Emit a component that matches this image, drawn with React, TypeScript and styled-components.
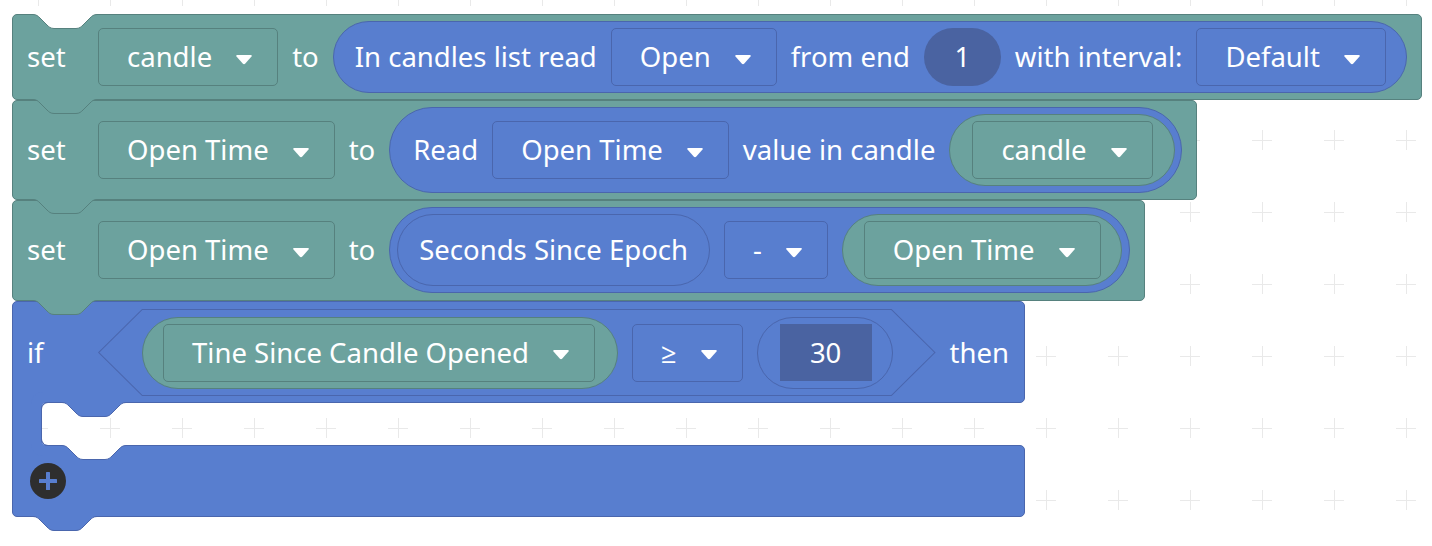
import React from 'react';
import styled, { createGlobalStyle, css } from 'styled-components';

type Tone = 'teal' | 'blue';

const palette: Record<Tone, { fill: string; stroke: string }> = {
  teal: { fill: '#6ca29e', stroke: '#56817e' },
  blue: { fill: '#587ecf', stroke: '#4a66ad' },
};
const FIELD_DARK = '#4a63a1';
const GRID_COLOR = '#e9e9e9';
const NOTCH =
  'c 3.5,0 5.25,1.75 7,3.5 l 7,7 c 1.75,1.75 3.5,3.5 7,3.5 h 22 c 3.5,0 5.25,-1.75 7,-3.5 l 7,-7 c 1.75,-1.75 3.5,-3.5 7,-3.5';

const GlobalStyle = createGlobalStyle`
  *, *::before, *::after { box-sizing: border-box; }
  html, body { margin: 0; padding: 0; background: #ffffff; }
  body { font-family: "Noto Sans", "Open Sans", sans-serif; }
`;

const Workspace = styled.main`
  position: relative;
  width: 1432px;
  height: 546px;
  overflow: hidden;
  background: #ffffff;
  color: #ffffff;
`;

const GridLayer = styled.svg`
  position: absolute;
  inset: 0;
  width: 100%;
  height: 100%;
`;

const Stack = styled.div`
  position: absolute;
  left: 12px;
  top: 14px;
  display: flex;
  flex-direction: column;
  align-items: flex-start;
`;

const Block = styled.div<{ $tone: Tone; $padB?: number }>`
  position: relative;
  display: flex;
  align-items: center;
  gap: 14px;
  padding: 6px 14px ${(p) => p.$padB ?? 6}px 14px;
  background: ${(p) => palette[p.$tone].fill};
  border: 1px solid ${(p) => palette[p.$tone].stroke};
  border-radius: 5px;
`;

const Text = styled.span<{ $lead?: boolean }>`
  font-size: 27.5px;
  line-height: 1;
  white-space: nowrap;
  color: #ffffff;
  ${(p) =>
    p.$lead &&
    css`
      min-width: 57px;
    `}
`;

const DropdownBox = styled.div<{ $tone: Tone }>`
  display: flex;
  align-items: center;
  gap: 23px;
  height: 58px;
  padding: 0 24px 0 28px;
  background: ${(p) => palette[p.$tone].fill};
  border: 1px solid ${(p) => palette[p.$tone].stroke};
  border-radius: 5px;
`;

const ArrowSvg = styled.svg`
  flex: none;
  margin-top: 4px;
`;

const Pill = styled.div<{ $tone: Tone; $h: number; $pl: number; $pr: number }>`
  display: flex;
  align-items: center;
  gap: 14px;
  height: ${(p) => p.$h}px;
  padding: 0 ${(p) => p.$pr}px 0 ${(p) => p.$pl}px;
  border-radius: ${(p) => p.$h / 2}px;
  background: ${(p) => palette[p.$tone].fill};
  border: 1px solid ${(p) => palette[p.$tone].stroke};
`;

const NumberOval = styled.div`
  display: flex;
  align-items: center;
  justify-content: center;
  width: 77px;
  height: 58px;
  border-radius: 29px;
  background: ${FIELD_DARK};
`;

const NumberRect = styled.div`
  display: flex;
  align-items: center;
  justify-content: center;
  width: 92px;
  height: 57px;
  background: ${FIELD_DARK};
`;

const Hex = styled.div`
  position: relative;
  isolation: isolate;
  display: flex;
  align-items: center;
  gap: 14px;
  height: 87px;
  padding: 0 43px 0 44px;
  &::before,
  &::after {
    content: '';
    position: absolute;
    z-index: -1;
  }
  &::before {
    inset: 0;
    background: ${palette.blue.stroke};
    clip-path: polygon(44px 0, calc(100% - 44px) 0, 100% 50%, calc(100% - 44px) 100%, 44px 100%, 0 50%);
  }
  &::after {
    inset: 1px;
    background: ${palette.blue.fill};
    clip-path: polygon(
      43.4px 0,
      calc(100% - 43.4px) 0,
      calc(100% - 0.4px) 50%,
      calc(100% - 43.4px) 100%,
      43.4px 100%,
      0.4px 50%
    );
  }
`;

const IfBlock = styled.div`
  display: flex;
  flex-direction: column;
  align-items: stretch;
`;

const IfHead = styled.div`
  position: relative;
  display: flex;
  align-items: center;
  gap: 14px;
  padding: 7px 15px 6px 14px;
  background: ${palette.blue.fill};
  border: 1px solid ${palette.blue.stroke};
  border-radius: 5px 5px 5px 0;
`;

const IfMouth = styled.div`
  display: flex;
  height: 42px;
`;

const IfArm = styled.div`
  position: relative;
  z-index: 1;
  width: 30px;
  margin: -1px 0;
  background: ${palette.blue.fill};
  border-left: 1px solid ${palette.blue.stroke};
  border-right: 1px solid ${palette.blue.stroke};
`;

const IfGap = styled.div`
  position: relative;
  flex: 1;
  &::before,
  &::after {
    content: '';
    position: absolute;
    left: -1px;
    width: 8px;
    height: 8px;
    z-index: 1;
    border-left: 1px solid ${palette.blue.stroke};
  }
  &::before {
    top: -1px;
    border-top: 1px solid ${palette.blue.stroke};
    border-top-left-radius: 7px;
    box-shadow: -5px -5px 0 5px ${palette.blue.fill};
  }
  &::after {
    bottom: -1px;
    border-bottom: 1px solid ${palette.blue.stroke};
    border-bottom-left-radius: 7px;
    box-shadow: -5px 5px 0 5px ${palette.blue.fill};
  }
`;

const IfFoot = styled.div`
  position: relative;
  display: flex;
  align-items: center;
  height: 72px;
  padding-left: 17px;
  background: ${palette.blue.fill};
  border: 1px solid ${palette.blue.stroke};
  border-radius: 0 5px 5px 5px;
`;

const AddButton = styled.button`
  display: flex;
  align-items: center;
  justify-content: center;
  width: 36px;
  height: 36px;
  padding: 0;
  border: none;
  border-radius: 50%;
  background: #2e2e2e;
`;

const Connector = styled.svg<{ $left: number; $edge: 'top' | 'bottom' }>`
  position: absolute;
  z-index: 2;
  left: ${(p) => p.$left}px;
  ${(p) => (p.$edge === 'bottom' ? 'top: calc(100% - 1px);' : 'top: -2px;')}
  width: 66px;
  height: 18px;
  overflow: visible;
`;

function Tab({ tone, left = 20 }: { tone: Tone; left?: number }) {
  return (
    <Connector $left={left} $edge="bottom" viewBox="0 0 66 18" aria-hidden>
      <path d={`M0,0 V1.5 ${NOTCH} V0 Z`} fill={palette[tone].fill} />
      <path d={`M0,1.5 ${NOTCH}`} fill="none" stroke={palette[tone].stroke} strokeWidth="1" />
    </Connector>
  );
}

function NotchCut({ tone, left = 20 }: { tone: Tone; left?: number }) {
  return (
    <Connector $left={left} $edge="top" viewBox="0 0 66 18" aria-hidden>
      <path d={`M0,0 V1.5 ${NOTCH} V0 Z`} fill="#ffffff" />
      <path d={`M0,1.5 ${NOTCH}`} fill="none" stroke={palette[tone].stroke} strokeWidth="1" />
    </Connector>
  );
}

function Arrow() {
  return (
    <ArrowSvg width="18" height="11" viewBox="0 0 18 11" aria-hidden>
      <path
        d="M2.2,1 H15.8 Q17.6,1 16.5,2.5 L10.3,9.6 Q9,11 7.7,9.6 L1.5,2.5 Q0.4,1 2.2,1 Z"
        fill="#ffffff"
      />
    </ArrowSvg>
  );
}

function Dropdown({ tone, children }: { tone: Tone; children: React.ReactNode }) {
  return (
    <DropdownBox $tone={tone}>
      <Text>{children}</Text>
      <Arrow />
    </DropdownBox>
  );
}

function Grid() {
  return (
    <GridLayer aria-hidden>
      <defs>
        <pattern id="ws-grid" width="72" height="72" patternUnits="userSpaceOnUse" x="2" y="32">
          <path d="M26 36.5 H46 M36.5 26 V46" stroke={GRID_COLOR} strokeWidth="1" />
        </pattern>
      </defs>
      <rect width="100%" height="100%" fill="url(#ws-grid)" />
    </GridLayer>
  );
}

export default function App() {
  return (
    <>
      <GlobalStyle />
      <Workspace>
        <Grid />
        <Stack>
          <Block $tone="teal">
            <NotchCut tone="teal" />
            <Text $lead>set</Text>
            <Dropdown tone="teal">candle</Dropdown>
            <Text>to</Text>
            <Pill $tone="blue" $h={72} $pl={21} $pr={20}>
              <Text>In candles list read</Text>
              <Dropdown tone="blue">Open</Dropdown>
              <Text>from end</Text>
              <NumberOval>
                <Text>1</Text>
              </NumberOval>
              <Text>with interval:</Text>
              <Dropdown tone="blue">Default</Dropdown>
            </Pill>
            <Tab tone="teal" />
          </Block>

          <Block $tone="teal">
            <Text $lead>set</Text>
            <Dropdown tone="teal">Open Time</Dropdown>
            <Text>to</Text>
            <Pill $tone="blue" $h={86} $pl={23} $pr={6}>
              <Text>Read</Text>
              <Dropdown tone="blue">Open Time</Dropdown>
              <Text>value in candle</Text>
              <Pill $tone="teal" $h={72} $pl={22} $pr={21}>
                <Dropdown tone="teal">candle</Dropdown>
              </Pill>
            </Pill>
            <Tab tone="teal" />
          </Block>

          <Block $tone="teal" $padB={7}>
            <Text $lead>set</Text>
            <Dropdown tone="teal">Open Time</Dropdown>
            <Text>to</Text>
            <Pill $tone="blue" $h={86} $pl={7} $pr={7}>
              <Pill $tone="blue" $h={72} $pl={21} $pr={21}>
                <Text>Seconds Since Epoch</Text>
              </Pill>
              <Dropdown tone="blue">-</Dropdown>
              <Pill $tone="teal" $h={72} $pl={21} $pr={20}>
                <Dropdown tone="teal">Open Time</Dropdown>
              </Pill>
            </Pill>
            <Tab tone="teal" />
          </Block>

          <IfBlock>
            <IfHead>
              <Text $lead>if</Text>
              <Hex>
                <Pill $tone="teal" $h={72} $pl={20} $pr={22}>
                  <Dropdown tone="teal">Tine Since Candle Opened</Dropdown>
                </Pill>
                <Dropdown tone="blue">≥</Dropdown>
                <Pill $tone="blue" $h={72} $pl={22} $pr={20}>
                  <NumberRect>
                    <Text>30</Text>
                  </NumberRect>
                </Pill>
              </Hex>
              <Text>then</Text>
              <Tab tone="blue" left={49} />
            </IfHead>
            <IfMouth>
              <IfArm />
              <IfGap />
            </IfMouth>
            <IfFoot>
              <NotchCut tone="blue" left={49} />
              <AddButton type="button" aria-label="Add">
                <svg width="20" height="20" viewBox="0 0 20 20" aria-hidden>
                  <rect x="8" y="1" width="4" height="18" rx="0.5" fill={palette.blue.fill} />
                  <rect x="1" y="8" width="18" height="4" rx="0.5" fill={palette.blue.fill} />
                </svg>
              </AddButton>
              <Tab tone="blue" />
            </IfFoot>
          </IfBlock>
        </Stack>
      </Workspace>
    </>
  );
}
